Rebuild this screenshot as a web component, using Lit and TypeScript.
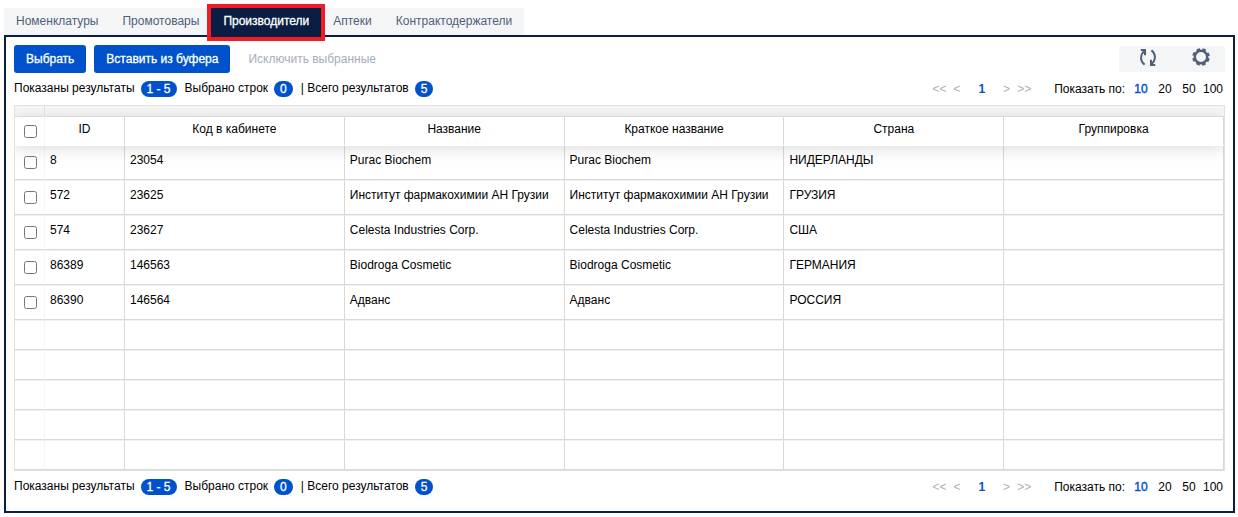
import { LitElement, html, css } from "lit";
import { customElement, state } from "lit/decorators.js";

interface Producer {
  id: string;
  code: string;
  name: string;
  shortName: string;
  country: string;
}

const TABS = ["Номенклатуры", "Промотовары", "Производители", "Аптеки", "Контрактодержатели"];
const COLUMNS = ["ID", "Код в кабинете", "Название", "Краткое название", "Страна", "Группировка"];
const PAGE_SIZES = [10, 20, 50, 100];
const EMPTY_ROWS = 5;

const ROWS: Producer[] = [
  { id: "8", code: "23054", name: "Purac Biochem", shortName: "Purac Biochem", country: "НИДЕРЛАНДЫ" },
  { id: "572", code: "23625", name: "Институт фармакохимии АН Грузии", shortName: "Институт фармакохимии АН Грузии", country: "ГРУЗИЯ" },
  { id: "574", code: "23627", name: "Celesta Industries Corp.", shortName: "Celesta Industries Corp.", country: "США" },
  { id: "86389", code: "146563", name: "Biodroga Cosmetic", shortName: "Biodroga Cosmetic", country: "ГЕРМАНИЯ" },
  { id: "86390", code: "146564", name: "Адванс", shortName: "Адванс", country: "РОССИЯ" },
];

@customElement("app-root")
export class AppRoot extends LitElement {
  @state() private activeTab = 2;
  @state() private pageSize = 10;
  @state() private selected = new Set<string>();

  static styles = css`
    :host {
      display: block;
      padding: 8px 3px 4px 4px;
      font: 12px/16px "Liberation Sans", Arial, sans-serif;
      color: #000;
    }
    * { box-sizing: border-box; }
    button { font: inherit; margin: 0; padding: 0; border: 0; background: none; cursor: pointer; }
    .tabs { display: flex; width: max-content; background: #f4f5f7; }
    .tab { height: 27px; padding: 0 12px 1px; color: #505f79; }
    .tab.active {
      position: relative;
      z-index: 1;
      height: 29px;
      margin-bottom: -2px;
      padding-bottom: 3px;
      background: #091e42;
      color: #fff;
      -webkit-text-stroke: 0.3px #fff;
      outline: 4px solid #ee1c25;
    }
    .panel { border: 2px solid #091e42; padding: 8px; }
    .toolbar { display: flex; align-items: center; gap: 8px; }
    .btn { height: 28px; padding: 0 12px; border-radius: 3px; }
    .primary { background: #0052cc; color: #fff; -webkit-text-stroke: 0.3px #fff; }
    .btn:disabled { color: #a5adba; padding: 0 10px; cursor: default; }
    .tools {
      display: flex;
      gap: 3px;
      margin-left: auto;
      padding-left: 3px;
      height: 26px;
      background: #f4f5f7;
      border-radius: 3px;
    }
    .tool { width: 50px; display: flex; justify-content: center; align-items: flex-start; padding-left: 2px; }
    .tool svg { display: block; }
    .status { display: flex; justify-content: space-between; padding: 7px 0 8px; }
    .summary, .pages, .sizes { display: flex; }
    .pill {
      height: 16px;
      margin: 1px 8px 0 6px;
      padding: 0 6px;
      border-radius: 8px;
      background: #0052cc;
      color: #fff;
      -webkit-text-stroke: 0.3px #fff;
    }
    .pages { gap: 1px; }
    .pages button { color: #b0b0b0; padding: 0 3px; }
    .pages .current { color: #0052cc; font-weight: 700; margin: 0 11px; }
    .sizes { margin-left: 20px; }
    .sizes button { width: 24px; text-align: center; color: #000; }
    .sizes .on { color: #0052cc; -webkit-text-stroke: 0.4px #0052cc; }
    .sizes span { margin-right: 4px; }
    .right { display: flex; padding-top: 1px; }
    .grid { border: 1px solid #e0e0e0; overflow: hidden; }
    .strip { height: 10px; background: #f6f6f6; }
    .strip div { width: 30px; height: 10px; border-right: 1px solid #e4e4e4; }
    table { width: 100%; table-layout: fixed; border-collapse: separate; border-spacing: 0; }
    .c-check { width: 30px; }
    .c-id { width: 80px; }
    th, td {
      padding: 6px 5px 0;
      vertical-align: top;
      text-align: left;
      font-weight: 400;
      border-right: 1px solid #d9d9d9;
      overflow: hidden;
      white-space: nowrap;
      text-overflow: ellipsis;
    }
    td { height: 35px; border-bottom: 1px solid #d9d9d9; border-top: 1px solid #f0f0f0; }
    .empty td { height: 30px; }
    thead { position: relative; z-index: 1; box-shadow: 0 1px 0 #fff, 0 3px 16px rgba(0, 0, 0, 0.15); }
    th { height: 29px; padding-top: 4px; text-align: center; background: #fff; border-top: 1px solid #dcdcdc; }
    th.check, td.check { padding-left: 9px; text-align: left; border-right-color: #f5f5f5; }
    input { display: block; width: 13px; height: 13px; margin: 4px 0 0; }
    td.check { padding-top: 6px; }
  `;

  private toggle(id: string) {
    const next = new Set(this.selected);
    next.has(id) ? next.delete(id) : next.add(id);
    this.selected = next;
  }

  private toggleAll() {
    this.selected = this.selected.size === ROWS.length ? new Set() : new Set(ROWS.map((r) => r.id));
  }

  private renderStatus() {
    return html`
      <div class="status">
        <div class="summary">
          <span>Показаны результаты</span><span class="pill">1 - 5</span>
          <span>Выбрано строк</span><span class="pill">${this.selected.size}</span>
          <span>| Всего результатов</span><span class="pill">${ROWS.length}</span>
        </div>
        <div class="right">
          <div class="pages">
            <button>&lt;&lt;</button><button>&lt;</button>
            <button class="current">1</button>
            <button>&gt;</button><button>&gt;&gt;</button>
          </div>
          <div class="sizes">
            <span>Показать по:</span>
            ${PAGE_SIZES.map(
              (n) => html`<button class=${n === this.pageSize ? "on" : ""} @click=${() => (this.pageSize = n)}>${n}</button>`
            )}
          </div>
        </div>
      </div>
    `;
  }

  render() {
    return html`
      <nav class="tabs">
        ${TABS.map(
          (t, i) => html`<button class="tab ${i === this.activeTab ? "active" : ""}" @click=${() => (this.activeTab = i)}>${t}</button>`
        )}
      </nav>
      <main class="panel">
        <div class="toolbar">
          <button class="btn primary">Выбрать</button>
          <button class="btn primary">Вставить из буфера</button>
          <button class="btn" ?disabled=${this.selected.size === 0}>Исключить выбранные</button>
          <div class="tools">
            <button class="tool" aria-label="Обновить">
              <svg width="24" height="24" viewBox="0 0 24 24" fill="none" stroke="#505f79" stroke-width="2">
                <path d="M8.6 18.6C3.8 15 4 8.4 8.8 4.8M4.8 4H9V9.2M15.4 4.4C20.2 8 20 14.6 15.2 18.2M19.2 19H15V13.8" />
                <path d="M6 3H10V7ZM18 20H14V16Z" fill="#505f79" stroke="none" />
              </svg>
            </button>
            <button class="tool" aria-label="Настройки">
              <svg width="24" height="24" viewBox="0 0 24 24" fill="none" stroke="#505f79">
                <circle cx="12" cy="11" r="6.2" stroke-width="2.4" />
                <circle cx="12" cy="11" r="7.8" stroke-width="2" stroke-dasharray="3.6 2.526" stroke-dashoffset="-1.263" />
              </svg>
            </button>
          </div>
        </div>
        ${this.renderStatus()}
        <div class="grid">
          <div class="strip"><div></div></div>
          <table>
            <colgroup>
              <col class="c-check" /><col class="c-id" /><col /><col /><col /><col /><col />
            </colgroup>
            <thead>
              <tr>
                <th class="check">
                  <input type="checkbox" aria-label="Выбрать все" .checked=${this.selected.size === ROWS.length} @change=${this.toggleAll} />
                </th>
                ${COLUMNS.map((c) => html`<th scope="col">${c}</th>`)}
              </tr>
            </thead>
            <tbody>
              ${ROWS.map(
                (r) => html`<tr>
                  <td class="check">
                    <input type="checkbox" aria-label=${r.name} .checked=${this.selected.has(r.id)} @change=${() => this.toggle(r.id)} />
                  </td>
                  <td>${r.id}</td>
                  <td>${r.code}</td>
                  <td>${r.name}</td>
                  <td>${r.shortName}</td>
                  <td>${r.country}</td>
                  <td></td>
                </tr>`
              )}
              ${Array.from(
                { length: EMPTY_ROWS },
                () => html`<tr class="empty"><td class="check"></td>${COLUMNS.map(() => html`<td></td>`)}</tr>`
              )}
            </tbody>
          </table>
        </div>
        ${this.renderStatus()}
      </main>
    `;
  }
}
